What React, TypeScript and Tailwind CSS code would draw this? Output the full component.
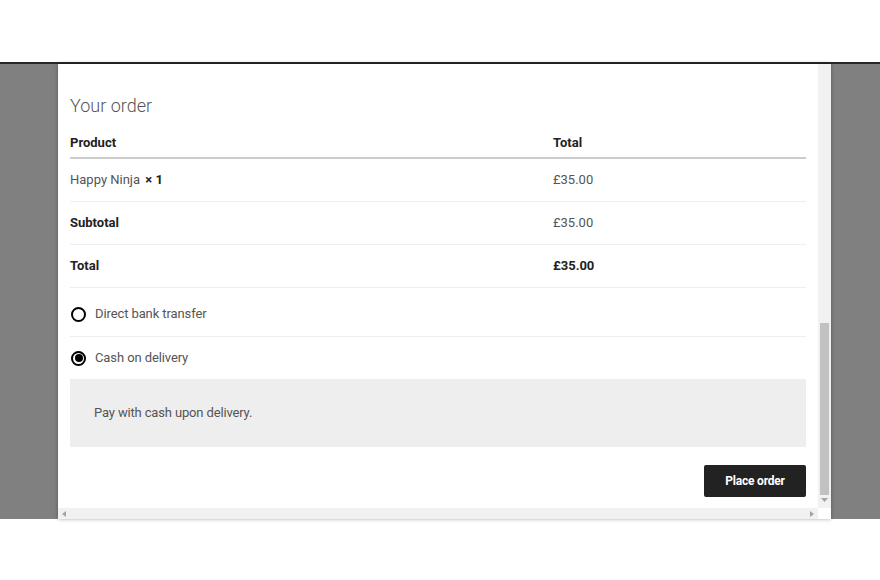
import React from "react";

const font = { fontFamily: "Roboto, 'Liberation Sans', sans-serif" };

function Radio({ checked }: { checked?: boolean }) {
  return (
    <span className="flex h-[15px] w-[15px] items-center justify-center rounded-full border-2 border-black bg-white">
      {checked ? <span className="h-[8px] w-[8px] rounded-full bg-black" /> : null}
    </span>
  );
}

export default function App() {
  return (
    <div className="flex h-[580px] w-[880px] flex-col bg-white" style={font}>
      <div className="h-[62px] bg-white" />
      <div className="h-[2px] bg-[#23282d]" />
      <div className="flex h-[455px] bg-[#808080]">
        <div className="w-[58px]" />
        <div className="relative z-10 flex w-[773px] flex-col bg-white shadow-[0_0_4px_rgba(0,0,0,0.35)]">
          <div className="flex h-[444px]">
            <div className="w-[760px] overflow-hidden px-[12px]">
              <div className="pt-[30px] text-[18px] font-light leading-[24px] text-[#555]">Your order</div>
              <div className="flex h-[41px] items-end border-b-2 border-[#cccccc] pb-[4px] text-[13px] font-bold leading-[20px] text-[#222]">
                <div className="w-[483px]">Product</div>
                <div>Total</div>
              </div>
              <div className="flex h-[43px] items-center border-b border-[#eeeeee] text-[13px] leading-[20px] text-[#555]">
                <div className="w-[483px]">
                  Happy Ninja <strong className="ml-[2px] font-bold text-[#222]">×&nbsp;1</strong>
                </div>
                <div>£35.00</div>
              </div>
              <div className="flex h-[43px] items-center border-b border-[#eeeeee] text-[13px] leading-[20px] text-[#555]">
                <div className="w-[483px] font-bold text-[#222]">Subtotal</div>
                <div>£35.00</div>
              </div>
              <div className="flex h-[43px] items-center border-b border-[#eeeeee] text-[13px] leading-[20px] text-[#222]">
                <div className="w-[483px] font-bold">Total</div>
                <div className="font-bold">£35.00</div>
              </div>
              <div className="flex h-[49px] items-start gap-[9px] border-b border-[#eeeeee] pl-[1px] pt-[16px] text-[13px] leading-[20px] text-[#555]">
                <span className="mt-[3px]"><Radio /></span>
                <span className="tracking-[-0.1px]">Direct bank transfer</span>
              </div>
              <div className="flex h-[42px] items-center gap-[9px] pl-[1px] text-[13px] leading-[20px] text-[#555]">
                <Radio checked />
                <span className="tracking-[-0.1px]">Cash on delivery</span>
              </div>
              <div className="flex h-[68px] items-center bg-[#eeeeee] pl-[24px] text-[13px] leading-[20px] tracking-[-0.15px] text-[#555]">
                Pay with cash upon delivery.
              </div>
              <div className="flex justify-end pt-[18px]">
                <button className="h-[32px] w-[102px] rounded-[2px] bg-[#222222] text-[12px] font-bold tracking-[-0.2px] text-white">
                  Place order
                </button>
              </div>
            </div>
            <div className="relative w-[13px] bg-[#f1f1f1]">
              <div className="absolute left-[2px] top-[259px] h-[172px] w-[9px] bg-[#c1c1c1]" />
              <svg className="absolute left-[3px] top-[434px]" width="7" height="5" viewBox="0 0 7 5">
                <path d="M0 0 L7 0 L3.5 4 Z" fill="#a3a3a3" />
              </svg>
            </div>
          </div>
          <div className="flex h-[11px]">
            <div className="relative w-[760px] bg-[#f1f1f1]">
              <svg className="absolute left-[4px] top-[3px]" width="4" height="6" viewBox="0 0 4 6">
                <path d="M4 0 L4 6 L0 3 Z" fill="#a3a3a3" />
              </svg>
              <svg className="absolute right-[4px] top-[3px]" width="4" height="6" viewBox="0 0 4 6">
                <path d="M0 0 L0 6 L4 3 Z" fill="#a3a3a3" />
              </svg>
            </div>
            <div className="w-[13px] bg-white" />
          </div>
        </div>
        <div className="flex-1" />
      </div>
      <div className="flex-1 bg-white" />
    </div>
  );
}
